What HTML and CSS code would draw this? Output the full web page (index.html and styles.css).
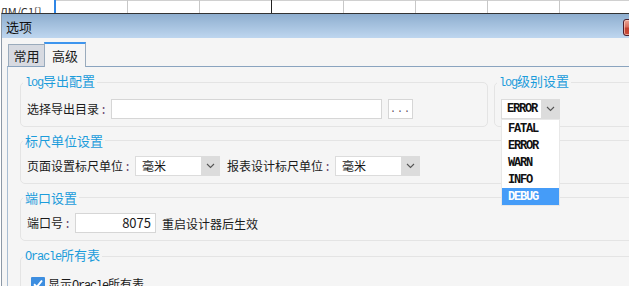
FILE: index.html
```html
<!DOCTYPE html>
<html lang="zh">
<head>
    <meta charset="UTF-8">
    <title>选项</title>
    <link rel="stylesheet" href="styles.css">
</head>
<body>
    <div class="sheet">
        <div class="cell cell-active">ЛМ/С1[]</div>
        <div class="cell"></div>
        <div class="cell"></div>
        <div class="cell cell-cursor"></div>
        <div class="cell"></div>
        <div class="cell"></div>
        <div class="cell"></div>
        <div class="cell"></div>
        <div class="cell"></div>
    </div>

    <div class="dialog">
        <div class="titlebar">
            <span class="title">选项</span>
            <span class="close"></span>
        </div>

        <div class="dialog-body">
            <div class="tabs">
                <div class="tab">常用</div>
                <div class="tab active">高级</div>
            </div>

            <div class="panel">
                <div class="top-row">
                    <fieldset class="group group-export">
                        <legend><span class="mono">log</span>导出配置</legend>
                        <div class="row">
                            <span class="lbl lbl-export">选择导出目录<span class="colon">:</span></span>
                            <span class="field field-path"></span>
                            <span class="btn-browse">...</span>
                        </div>
                    </fieldset>

                    <fieldset class="group group-level">
                        <legend><span class="mono">log</span>级别设置</legend>
                        <div class="row">
                            <div class="select select-level">
                                <span class="value mono">ERROR</span>
                                <span class="arrow">
                                    <svg width="9" height="6" viewBox="0 0 9 6"><path d="M1 1 L4.5 4.5 L8 1" fill="none" stroke="#555" stroke-width="1.1"/></svg>
                                </span>
                                <ul class="dropdown">
                                    <li>FATAL</li>
                                    <li>ERROR</li>
                                    <li>WARN</li>
                                    <li>INFO</li>
                                    <li class="selected">DEBUG</li>
                                </ul>
                            </div>
                        </div>
                    </fieldset>
                </div>

                <fieldset class="group">
                    <legend>标尺单位设置</legend>
                    <div class="row">
                        <span class="lbl lbl-unit">页面设置标尺单位<span class="colon">:</span></span>
                        <div class="select select-unit">
                            <span class="value">毫米</span>
                            <span class="arrow">
                                <svg width="9" height="6" viewBox="0 0 9 6"><path d="M1 1 L4.5 4.5 L8 1" fill="none" stroke="#555" stroke-width="1.1"/></svg>
                            </span>
                        </div>
                        <span class="lbl lbl-unit lbl-second">报表设计标尺单位<span class="colon">:</span></span>
                        <div class="select select-unit">
                            <span class="value">毫米</span>
                            <span class="arrow">
                                <svg width="9" height="6" viewBox="0 0 9 6"><path d="M1 1 L4.5 4.5 L8 1" fill="none" stroke="#555" stroke-width="1.1"/></svg>
                            </span>
                        </div>
                    </div>
                </fieldset>

                <fieldset class="group">
                    <legend>端口设置</legend>
                    <div class="row">
                        <span class="lbl lbl-port">端口号<span class="colon">:</span></span>
                        <span class="field field-port">8075</span>
                        <span class="hint">重启设计器后生效</span>
                    </div>
                </fieldset>

                <fieldset class="group">
                    <legend><span class="mono">Oracle</span>所有表</legend>
                    <div class="row row-check">
                        <span class="checkbox">
                            <svg width="14" height="14" viewBox="0 0 14 14"><path d="M3 7.2 L5.8 10 L11 3.5" fill="none" stroke="#fff" stroke-width="2"/></svg>
                        </span>
                        <span>显示<span class="mono">Oracle</span>所有表</span>
                    </div>
                </fieldset>
            </div>
        </div>
    </div>
</body>
</html>
```

FILE: styles.css
```css
body {
    margin: 0;
    background: #fff;
    font-family: "Noto Sans CJK SC", "Noto Sans", sans-serif;
    font-size: 12px;
    color: #1a1a1a;
    overflow: hidden;
    width: 629px;
    height: 286px;
}

.mono {
    font-family: "Liberation Mono", monospace;
    font-size: 12px;
    letter-spacing: -1.2px;
}

/* spreadsheet behind the dialog */
.sheet {
    display: flex;
    height: 13px;
    overflow: hidden;
    background: #fff;
}
.cell {
    flex: none;
    width: 71px;
    height: 13px;
    border-right: 1px solid #c8c8c8;
    box-shadow: inset 0 3px 0 -2px #d0d0d0;
}
.cell-active {
    width: 56px;
    border-right: 2px solid #2f86e6;
    box-shadow: none;
    padding-top: 4px;
    box-sizing: border-box;
    line-height: 14px;
    font-size: 11px;
    color: #333;
    overflow: hidden;
}
.cell-cursor {
    border-right-color: #222;
}

/* dialog frame */
.dialog {
    width: 720px;
    margin-left: 1px;
    border-top: 1px solid #333;
    border-left: 1px solid #8c98a6;
}
.titlebar {
    height: 24px;
    display: flex;
    align-items: center;
    background: linear-gradient(#8eaecf, #bed6ef);
}
.title {
    width: 621px;
    padding-left: 4px;
    box-sizing: border-box;
    font-size: 13px;
    color: #111;
}
.close {
    width: 40px;
    height: 17px;
    margin-top: 2px;
    box-sizing: border-box;
    border: 1px solid #4d1f2c;
    border-radius: 3px;
    background: linear-gradient(#eba595 0%, #d9705f 45%, #c2402f 55%, #c94c3a 100%);
    box-shadow: inset 0 0 0 1px rgba(255, 220, 210, 0.6);
}

.dialog-body {
    background: #f5f5f5;
    padding: 4px 0 0 5px;
    height: 260px;
}

/* tabs */
.tabs {
    display: flex;
    align-items: flex-end;
    height: 24px;
    padding-left: 1px;
}
.tab {
    width: 37px;
    height: 22px;
    box-sizing: border-box;
    text-align: center;
    line-height: 21px;
    font-size: 13px;
    background: #d7dae1;
    border: 1px solid #9aabbc;
    border-bottom: none;
}
.tab.active {
    width: 42px;
    height: 25px;
    margin-bottom: -1px;
    margin-left: -1px;
    background: #f5f5f5;
    border-top: 2px solid #3d95ee;
    line-height: 23px;
    position: relative;
}

.panel {
    border-top: 1px solid #8aa4bf;
    border-left: 1px solid #a9bdd2;
    padding: 5px 0 0 12px;
}

/* groups */
.top-row {
    display: flex;
    gap: 6px;
}
.group {
    margin: 0 0 5px;
    padding: 0 0 7px 2px;
    border: 1px solid #e4e4e4;
    border-radius: 5px;
    min-width: 0;
}
.group-export {
    width: 468px;
    box-sizing: border-box;
    flex: none;
}
.group-level {
    flex: 1;
}
legend {
    padding: 0 2px;
    color: #1c9cdb;
    font-size: 13px;
    line-height: 17px;
}
legend .mono {
    font-size: 12px;
}

.row {
    display: flex;
    align-items: center;
    height: 20px;
    padding: 7px 0 0 4px;
}
.lbl {
    flex: none;
}
.colon {
    font-family: "Liberation Mono", monospace;
    color: #6b4a72;
    margin-left: 1px;
}
.lbl-export {
    width: 84px;
}
.lbl-unit {
    width: 108px;
}
.lbl-second {
    margin-left: 7px;
}
.lbl-port {
    width: 48px;
}

.field {
    flex: none;
    height: 20px;
    box-sizing: border-box;
    background: #fff;
    border: 1px solid #d6d6d6;
}
.field-path {
    width: 271px;
}
.field-port {
    width: 81px;
    text-align: right;
    padding-right: 4px;
    line-height: 18px;
    font-size: 13px;
}
.btn-browse {
    margin-left: 6px;
    width: 25px;
    height: 20px;
    box-sizing: border-box;
    border: 1px solid #d6d6d6;
    background: #fff;
    text-align: center;
    line-height: 20px;
    color: #5a4a60;
    font-family: "Liberation Mono", monospace;
    font-size: 10px;
    letter-spacing: 1px;
}
.hint {
    margin-left: 6px;
}

/* combo boxes */
.select {
    flex: none;
    display: flex;
    height: 20px;
    box-sizing: border-box;
    border: 1px solid #dcdcdc;
    background: #fff;
    position: relative;
}
.select .value {
    flex: 1;
    padding-left: 6px;
    line-height: 18px;
}
.select .arrow {
    width: 18px;
    display: flex;
    align-items: center;
    justify-content: center;
    background: #dcdcdc;
}
.select-unit {
    width: 85px;
}
.select-level {
    width: 59px;
}
.select-level .value {
    padding-left: 5px;
    font-weight: bold;
    color: #111;
}

.dropdown {
    position: absolute;
    top: 19px;
    left: -1px;
    width: 59px;
    margin: 0;
    padding: 0;
    list-style: none;
    background: #fff;
    border: 1px solid #e8e8e8;
    box-sizing: border-box;
    z-index: 2;
}
.dropdown li {
    height: 17px;
    line-height: 18px;
    padding-left: 6px;
    font-family: "Liberation Mono", monospace;
    font-size: 12px;
    font-weight: bold;
    letter-spacing: -1.2px;
    color: #111;
}
.dropdown li.selected {
    background: #459cf8;
    color: #fff;
}

.row-check {
    padding-top: 8px;
    padding-left: 8px;
    gap: 3px;
}
.checkbox {
    width: 14px;
    height: 14px;
    background: #3d8ee0;
    border-radius: 1px;
    display: flex;
}
```
